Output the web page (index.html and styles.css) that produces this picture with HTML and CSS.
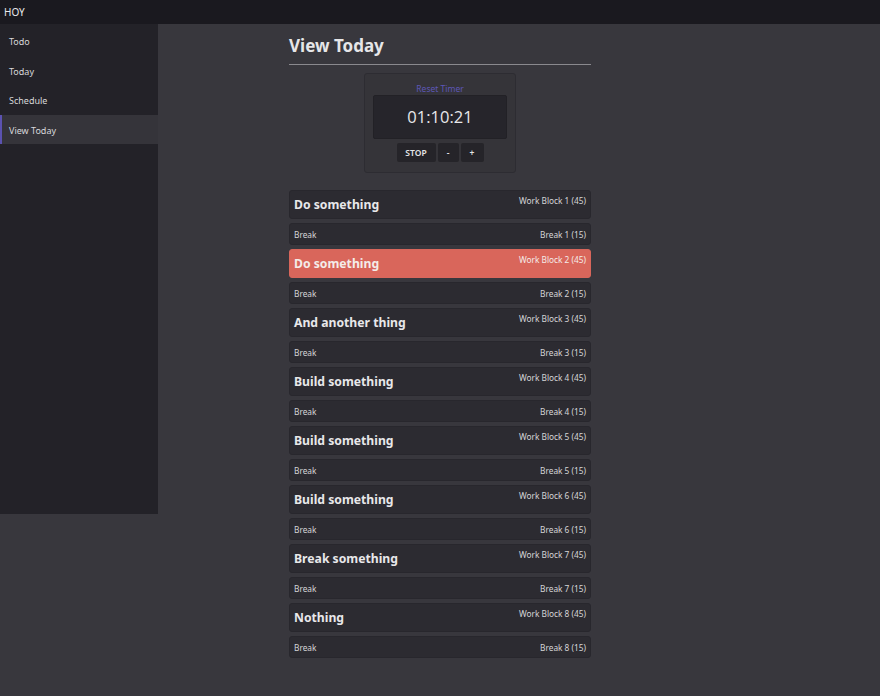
FILE: index.html
```html
<!DOCTYPE html>
<html lang="en">
<head>
    <meta charset="UTF-8">
    <meta name="viewport" content="width=device-width, initial-scale=1.0">
    <title>HOY</title>
    <link rel="stylesheet" href="styles.css">
</head>
<body>

    <header class="topbar">HOY</header>

    <div class="layout">
        <nav class="sidebar">
            <a class="nav-item" href="#">Todo</a>
            <a class="nav-item" href="#">Today</a>
            <a class="nav-item" href="#">Schedule</a>
            <a class="nav-item active" href="#">View Today</a>
        </nav>

        <main class="main">
            <div class="content">
                <h1 class="page-title">View Today</h1>

                <div class="timer">
                    <a class="reset" href="#">Reset Timer</a>
                    <div class="timer-display">01:10:21</div>
                    <div class="timer-buttons">
                        <button>STOP</button>
                        <button>-</button>
                        <button>+</button>
                    </div>
                </div>

                <div class="blocks">
                    <div class="block work"><span class="task">Do something</span><span class="label">Work Block 1 (45)</span></div>
                    <div class="block break"><span>Break</span><span>Break 1 (15)</span></div>

                    <div class="block work current"><span class="task">Do something</span><span class="label">Work Block 2 (45)</span></div>
                    <div class="block break"><span>Break</span><span>Break 2 (15)</span></div>

                    <div class="block work"><span class="task">And another thing</span><span class="label">Work Block 3 (45)</span></div>
                    <div class="block break"><span>Break</span><span>Break 3 (15)</span></div>

                    <div class="block work"><span class="task">Build something</span><span class="label">Work Block 4 (45)</span></div>
                    <div class="block break"><span>Break</span><span>Break 4 (15)</span></div>

                    <div class="block work"><span class="task">Build something</span><span class="label">Work Block 5 (45)</span></div>
                    <div class="block break"><span>Break</span><span>Break 5 (15)</span></div>

                    <div class="block work"><span class="task">Build something</span><span class="label">Work Block 6 (45)</span></div>
                    <div class="block break"><span>Break</span><span>Break 6 (15)</span></div>

                    <div class="block work"><span class="task">Break something</span><span class="label">Work Block 7 (45)</span></div>
                    <div class="block break"><span>Break</span><span>Break 7 (15)</span></div>

                    <div class="block work"><span class="task">Nothing</span><span class="label">Work Block 8 (45)</span></div>
                    <div class="block break"><span>Break</span><span>Break 8 (15)</span></div>
                </div>
            </div>
        </main>
    </div>

</body>
</html>
```

FILE: styles.css
```css
body {
    font-family: 'Noto Sans', sans-serif;
    margin: 0;
    background: #38373d;
    color: #e4e4e6;
}
.topbar {
    height: 24px;
    line-height: 24px;
    padding-left: 4px;
    background: #1a191f;
    font-size: 10px;
    color: #e8e8ea;
}
.layout {
    display: flex;
    align-items: flex-start;
}

/* Menu lateral */
.sidebar {
    width: 158px;
    height: 488px;
    padding-top: 2px;
    background: #232228;
    display: flex;
    flex-direction: column;
}
.nav-item {
    height: 29.5px;
    line-height: 31px;
    padding-left: 9px;
    font-size: 9px;
    color: #d8d8da;
    text-decoration: none;
    border-left: 2px solid transparent;
    margin-left: -2px;
}
.nav-item.active {
    background: #35343a;
    border-left-color: #5b52b0;
    margin-left: 0;
    padding-left: 7px;
}

/* Conteudo principal */
.main {
    flex: 1;
    padding-left: 131px;
}
.content {
    width: 302px;
}
.page-title {
    margin: 0;
    padding: 10px 0 7px;
    font-size: 17px;
    font-weight: 700;
    color: #e6e6e8;
    border-bottom: 1px solid #8a898e;
}
.timer {
    width: 150px;
    margin: 8px auto 17px;
    padding: 9px 0 10px;
    background: #353439;
    border: 1px solid #2d2c32;
    border-radius: 3px;
    display: flex;
    flex-direction: column;
    align-items: center;
}
.reset {
    font-size: 8.5px;
    color: #5d57b8;
    text-decoration: none;
    line-height: 12px;
}
.timer-display {
    width: 132px;
    height: 42px;
    line-height: 42px;
    text-align: center;
    background: #26252b;
    border: 1px solid #222126;
    border-radius: 2px;
    font-family: 'Open Sans', sans-serif;
    font-size: 16.5px;
    color: #e8e8ea;
}
.timer-buttons {
    display: flex;
    gap: 2px;
    margin-top: 4px;
}
.timer-buttons button {
    height: 19px;
    min-width: 21px;
    padding: 0 6px;
    border: none;
    border-radius: 2px;
    background: #252429;
    color: #e4e4e6;
    font-family: 'Noto Sans', sans-serif;
    font-size: 8.5px;
    font-weight: 600;
}
.timer-buttons button:first-child {
    width: 39px;
}
.timer-buttons button:last-child {
    width: 23px;
}

/* Blocos do dia */
.blocks {
    display: flex;
    flex-direction: column;
    gap: 4px;
}
.block {
    display: flex;
    justify-content: space-between;
    background: #2c2b31;
    border: 1px solid #28272d;
    border-radius: 3px;
    padding: 0 4px;
    font-size: 8.3px;
    color: #d6d6d8;
}
.block.work {
    height: 27px;
    align-items: flex-start;
}
.block.work .task {
    font-size: 12.2px;
    font-weight: 700;
    line-height: 27px;
    color: #e8e8ea;
}
.block.work .label {
    line-height: 19px;
}
.block.break {
    height: 20px;
    align-items: center;
}
.block.current {
    background: #d9665b;
    border-color: #d9665b;
}
.block.current .label,
.block.current .task {
    color: #f4ece9;
}
```
